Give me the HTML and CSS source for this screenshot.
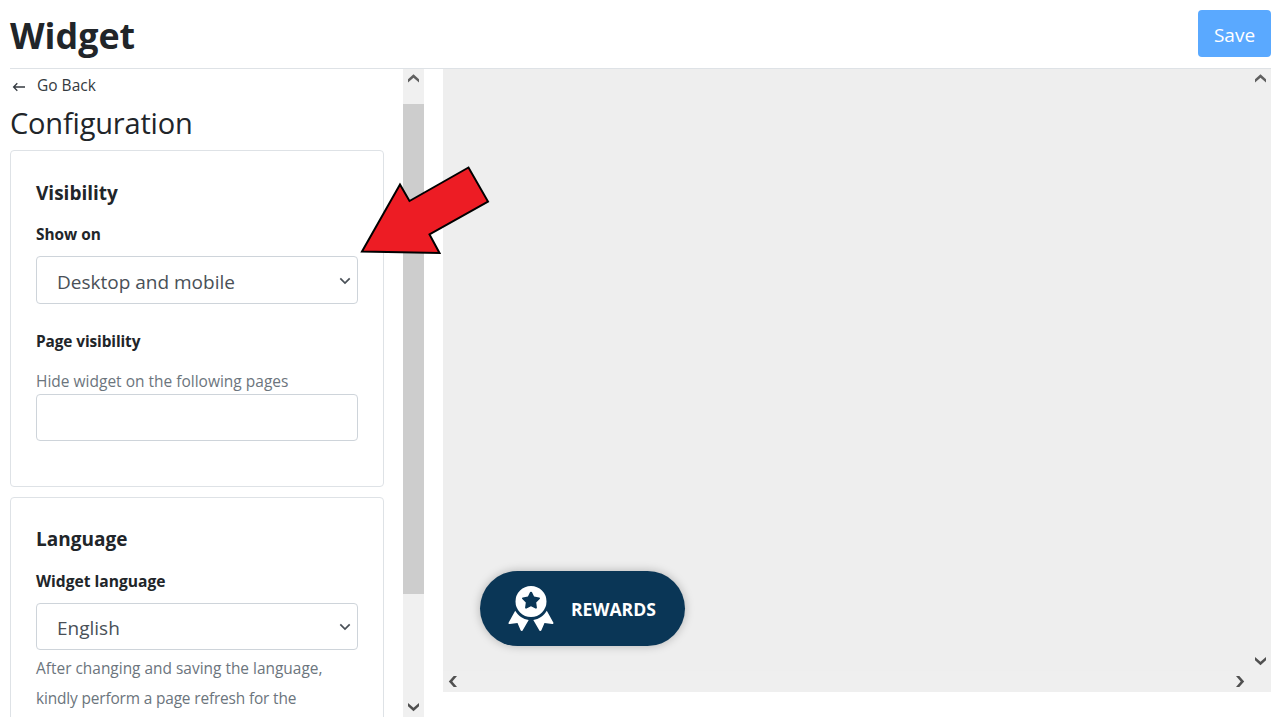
FILE: index.html
```html
<!DOCTYPE html>
<html lang="en">
<head>
<meta charset="utf-8">
<title>Widget</title>
<link rel="stylesheet" href="styles.css">
</head>
<body>
<header class="header">
  <h1 class="title"><span>Widget</span></h1>
  <button class="save"><span>Save</span></button>
</header>
<main class="main">
  <section class="sidebar">
    <a class="back">
      <svg width="14" height="10" viewBox="0 0 14 10"><path d="M13 5H2M5.3 1.3L1.6 5l3.7 3.7" fill="none" stroke="#343a40" stroke-width="1.3"/></svg>
      <span>Go Back</span>
    </a>
    <h2 class="heading"><span>Configuration</span></h2>
    <div class="card card-visibility">
      <h3 class="card-title"><span>Visibility</span></h3>
      <div class="label"><span>Show on</span></div>
      <div class="select tall"><span>Desktop and mobile</span>
        <svg width="12" height="8" viewBox="0 0 12 8"><path d="M1.3 1.3L6 6l4.7-4.7" fill="none" stroke="#495057" stroke-width="1.7"/></svg>
      </div>
      <div class="label label-page"><span>Page visibility</span></div>
      <div class="hint"><span>Hide widget on the following pages</span></div>
      <div class="input"></div>
    </div>
    <div class="card card-language">
      <h3 class="card-title"><span>Language</span></h3>
      <div class="label label-language"><span>Widget language</span></div>
      <div class="select"><span>English</span>
        <svg width="12" height="8" viewBox="0 0 12 8"><path d="M1.3 1.3L6 6l4.7-4.7" fill="none" stroke="#495057" stroke-width="1.7"/></svg>
      </div>
      <p class="note"><span>After changing and saving the language,</span><br><span class="note-tight">kindly perform a page refresh for the</span></p>
    </div>
  </section>
  <div class="scrollbar">
    <svg width="13" height="9" viewBox="0 0 13 9"><path d="M1 8.5V5.2L6.5 .3 12 5.2v3.3L6.5 3.8z" fill="#606060"/></svg>
    <div class="thumb"></div>
    <svg width="13" height="9" viewBox="0 0 13 9"><path d="M1 0v3.3l5.5 4.9L12 3.3V0L6.5 4.7z" fill="#505050"/></svg>
  </div>
  <section class="preview">
    <div class="canvas">
      <div class="rewards">
        <svg width="46" height="46" viewBox="0 0 46 46" fill="#fff">
          <path fill-rule="evenodd" d="M23 0a15.5 15.5 0 1 1 0 31a15.5 15.5 0 1 1 0-31zM23 5.5c-.4 0-.7.3-.9.6l-2.2 4.5-5.1.8c-.8.1-1.1 1-.5 1.6l3.5 3.6-.7 4.9c-.1.8.7 1.4 1.4 1l4.5-2.2 4.5 2.2c.7.4 1.5-.2 1.4-1l-.7-4.9 3.5-3.6c.6-.6.3-1.5-.5-1.6l-5.1-.8-2.2-4.5c-.2-.3-.5-.6-.9-.6z"/>
          <path d="M7.2 24.8L.7 36.5c-.5.9.1 1.7 1.1 1.6l7.7-1.2 3.1 7.4c.4.9 1.6.9 2 .1L20.700 34C15.100 33.200 10.200 29.900 7.200 24.800z"/>
          <path d="M38.800 24.800l6.500 11.700c.5.900-.1 1.700-1.100 1.600l-7.700-1.200-3.100 7.400c-.4.900-1.600.9-2 .1L25.300 34c5.600-.8 10.500-4.100 13.500-9.200z"/>
        </svg>
        <span>REWARDS</span>
      </div>
    </div>
    <div class="vbar">
      <svg width="13" height="9" viewBox="0 0 13 9"><path d="M1 8.5V5.2L6.5 .3 12 5.2v3.3L6.5 3.8z" fill="#606060"/></svg>
      <svg width="13" height="9" viewBox="0 0 13 9"><path d="M1 0v3.3l5.5 4.9L12 3.3V0L6.5 4.7z" fill="#505050"/></svg>
    </div>
    <div class="hbar">
      <svg width="9" height="13" viewBox="0 0 9 13"><path d="M9 1H5.7L.8 6.5 5.7 12H9L4.3 6.5z" fill="#505050"/></svg>
      <svg width="9" height="13" viewBox="0 0 9 13"><path d="M0 1h3.3l4.9 5.5L3.3 12H0l4.7-5.5z" fill="#505050"/></svg>
    </div>
  </section>
</main>
<svg class="pointer" width="132" height="92" viewBox="0 0 132 92"><path d="M3 86.5L41 19.5l9.500 16.500L109.500 2.500l19.500 34L70.500 69.500 80.500 88z" fill="#ed1c24" stroke="#000" stroke-width="2"/></svg>
</body>
</html>
```
FILE: styles.css
```css
* { box-sizing: border-box; }
body {
  margin: 0;
  height: 723px;
  overflow: hidden;
  background: #fff;
  color: #212529;
  font-family: "Open Sans", "Noto Sans", sans-serif;
}
h1, h2, h3, p { margin: 0; }
.header {
  display: flex;
  justify-content: space-between;
  height: 69px;
  margin: 0 9px 0 10px;
  padding-top: 10px;
  border-bottom: 1px solid #dee2e6;
}
.title { font-size: 35.8px; line-height: 51px; font-weight: 700; }
.save {
  width: 73px;
  height: 47px;
  padding: 3px 0 0;
  border: 0;
  border-radius: 4px;
  background: #5aa9ff;
  color: #fff;
  font: 19px/45px "Open Sans", sans-serif;
}
.main { display: flex; height: 648px; padding-left: 10px; overflow: hidden; }
.sidebar { width: 374px; height: 648px; overflow: hidden; }
.back {
  display: flex;
  align-items: center;
  height: 33px;
  padding-left: 2px;
  gap: 11px;
  color: #343a40;
  font-size: 15.5px;
}
.back span { padding-bottom: 1px; }
.back svg { margin-top: 3px; }
.heading { height: 48px; font-size: 29px; line-height: 42px; font-weight: 400; letter-spacing: -.18px; }
.card { border: 1px solid #dee2e6; border-radius: 4px; padding: 24px 25px; }
.card-visibility { height: 337px; }
.card-language { height: 337px; margin-top: 10px; }
.card-title { height: 42px; font-size: 19px; line-height: 36px; }
.card-language .card-title { line-height: 35px; }
.label { height: 39px; font-size: 15.4px; line-height: 36px; font-weight: 700; }
.label-page { margin-top: 20px; height: 44px; letter-spacing: -.1px; }
.label-language { font-size: 15.6px; line-height: 34px; }
.select, .input { border: 1px solid #ced4da; border-radius: 4px; height: 47px; }
.select {
  display: flex;
  align-items: center;
  justify-content: space-between;
  padding: 0 6px 0 20px;
  color: #495057;
  font-size: 19px;
}
.select span { padding-top: 3px; }
.select svg { margin-top: 1px; }
.tall { height: 48px; }
.hint { height: 26px; color: #6c757d; font-size: 15.5px; line-height: 27px; }
.note { padding-top: 3px; color: #6c757d; font-size: 15.45px; line-height: 30px; }
.note-tight { letter-spacing: -.16px; }
.scrollbar {
  display: flex;
  flex-direction: column;
  align-items: center;
  width: 21px;
  height: 648px;
  margin-left: 19px;
  padding: 5px 0;
  background: #f0f0f0;
}
.thumb { width: 21px; height: 490px; margin: 21px 0 auto; background: #cdcdcd; }
.preview {
  display: grid;
  grid-template-columns: 807px 21px;
  grid-template-rows: 602px 21px;
  width: 828px;
  height: 623px;
  margin-left: 19px;
  background: #efefef;
}
.canvas { display: flex; align-items: flex-end; padding: 0 0 25px 37px; background: #eee; }
.rewards {
  display: flex;
  align-items: center;
  width: 205px;
  height: 75px;
  padding-left: 27.5px;
  gap: 17.5px;
  border-radius: 38px;
  background: #0a3656;
  box-shadow: 0 0 10px rgba(0, 0, 0, .25);
  color: #fff;
  font-size: 17.6px;
  font-weight: 700;
}
.rewards span { padding-top: 1px; }
.vbar { display: flex; flex-direction: column; justify-content: space-between; align-items: center; padding: 5px 0; }
.hbar { display: flex; justify-content: space-between; align-items: center; padding: 0 5px; }
.pointer { position: absolute; left: 359px; top: 165px; }
```
